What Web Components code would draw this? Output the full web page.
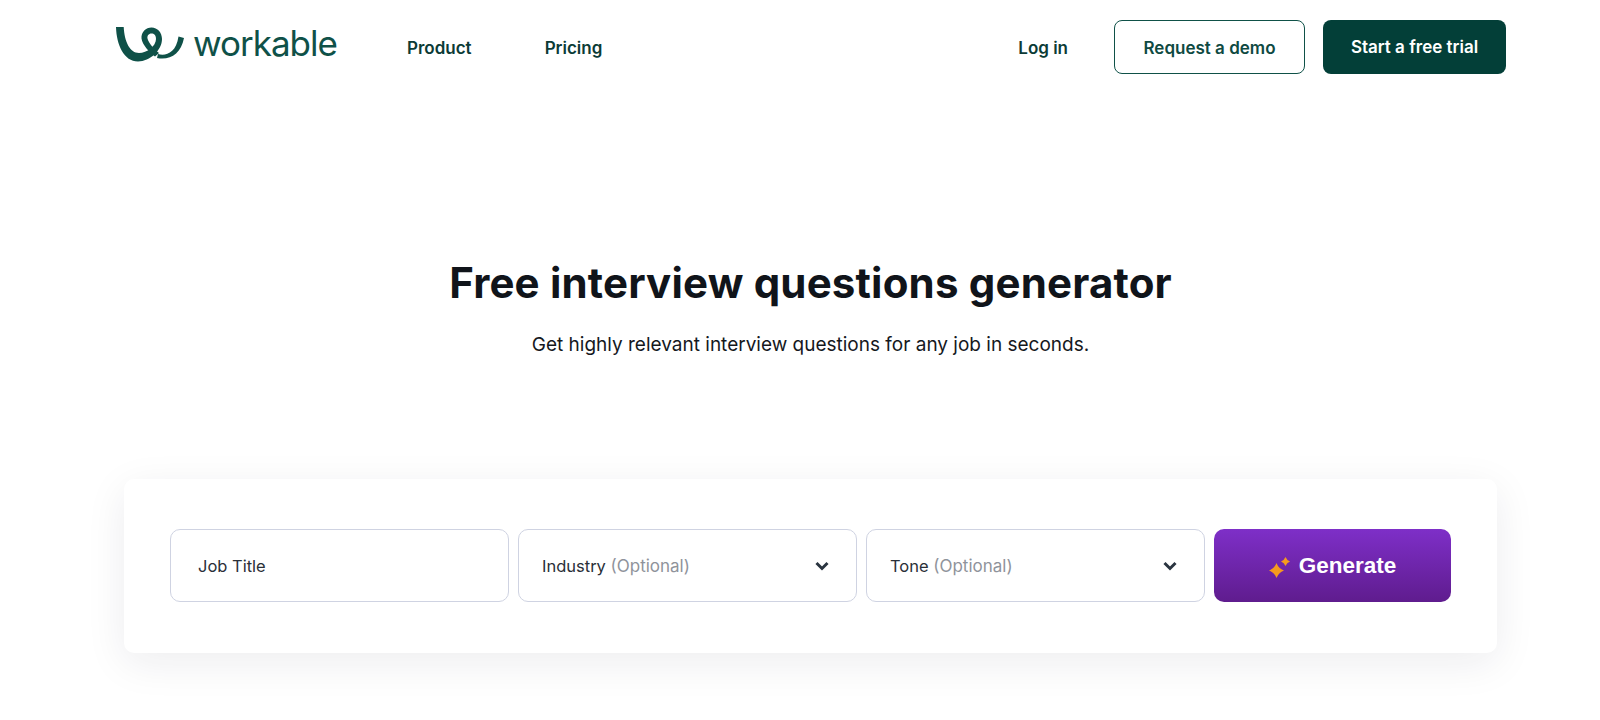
<!DOCTYPE html>
<html lang="en"><head><meta charset="utf-8"><title>Free interview questions generator</title>
<style>
html,body{margin:0;background:#fff;height:720px;overflow:hidden}
body{font-family:Inter,"Liberation Sans",sans-serif;color:#10141a}
</style></head><body>
<wk-page>
  <wk-nav slot="nav"></wk-nav>
  <wk-hero slot="hero" heading="Free interview questions generator" sub="Get highly relevant interview questions for any job in seconds."></wk-hero>
  <wk-form slot="form">
    <wk-field label="Job Title"></wk-field>
    <wk-field label="Industry" hint="(Optional)" select></wk-field>
    <wk-field label="Tone" hint="(Optional)" select></wk-field>
    <wk-generate>Generate</wk-generate>
  </wk-form>
</wk-page>
<script>
const def=(n,html,init)=>customElements.define(n,class extends HTMLElement{constructor(){super();this.attachShadow({mode:'open'}).innerHTML=html;init&&init(this)}});
def('wk-page',`<style>:host{display:block;width:1391px;margin-left:115px}</style>
<slot name="nav"></slot><slot name="hero"></slot><slot name="form"></slot>`);
def('wk-nav',`<style>
:host{display:flex;align-items:center;height:54px;margin-top:20px;font-weight:600;font-size:17px;color:#0c3b36}
svg{display:block;flex:none;margin-top:-6px}
.word{font:400 35px/1 Inter,sans-serif;color:#0f5148;margin-left:8px;width:147px;letter-spacing:-1px;margin-top:-7px}
nav{display:flex;gap:73px;margin-left:67px;padding-top:2px}
.sp{flex:1}
.login{margin-right:46px;padding-top:2px}
a{display:flex;align-items:center;justify-content:center;height:54px;border-radius:8px;box-sizing:border-box}
.demo{width:191px;border:1px solid #0f5148;color:#0f4a42;padding-top:2px}
.trial{width:183px;margin-left:18px;background:#033f38;color:#fff}
</style>
<svg width="70" height="40" viewBox="115 24 70 40" fill="#0f5148">
<path d="M116 27L123.700 27C124.500 42 130 53 139 53C147 53 156 46 156 39C156 35 154 33.500 151.500 33.500C148.500 33.500 147 36 147.500 38.500C148.500 43 154 49 159 53L155 56.500C149 52 142.500 45 141.500 38.500C141 32 146 27.500 151.500 27.500C157.500 27.500 162 32.500 162 39C162 50 150 61.500 138 61.500C124 61.500 116.500 45 116 27Z"/>
<path d="M158 54C165 56 176 54 178.500 36.500L184 38C181 54 170 60.500 157 58Z"/>
</svg>
<span class="word">workable</span>
<nav><span>Product</span><span>Pricing</span></nav>
<span class="sp"></span><span class="login">Log in</span>
<a class="demo">Request a demo</a><a class="trial">Start a free trial</a>`);
def('wk-hero',`<style>
:host{display:block;text-align:center}
h1{margin:0;padding-top:181px;font:700 42px/56px Inter,sans-serif;letter-spacing:.18px;color:#10141a}
p{margin:0;padding-top:21px;font:400 19px/26px Inter,sans-serif;color:#15181d}
</style><h1></h1><p></p>`,el=>{queueMicrotask(()=>{el.shadowRoot.querySelector('h1').textContent=el.getAttribute('heading');el.shadowRoot.querySelector('p').textContent=el.getAttribute('sub')})});
def('wk-form',`<style>
:host{display:grid;grid-template-columns:338.500px 338.500px 338.500px 237px;gap:9.500px;box-sizing:border-box;width:1373px;height:174px;margin:121px 0 0 9px;padding:50px 46px;background:#fff;border-radius:10px;box-shadow:0 10px 40px rgba(30,30,50,.08)}
</style><slot></slot>`);
def('wk-field',`<style>
:host{display:flex;align-items:center;justify-content:space-between;box-sizing:border-box;height:73px;border:1px solid #cfd3e2;border-radius:10px;padding:0 27px 0 23px;font-size:16.500px;color:#2a2f38}
:host([label="Job Title"]){padding-left:27px}
i{font-style:normal;color:#8f939b;font-size:17px}
svg{display:none}
:host([select]) svg{display:block}
</style><span><span id="l"></span> <i id="h"></i></span>
<svg width="14" height="10" viewBox="0 0 14 10" fill="none" stroke="#2a3440" stroke-width="3"><path d="M1.500 2l5.500 5.500L12.500 2"/></svg>`,el=>{queueMicrotask(()=>{el.shadowRoot.getElementById('l').textContent=el.getAttribute('label');el.shadowRoot.getElementById('h').textContent=el.getAttribute('hint')||''})});
def('wk-generate',`<style>
:host{display:flex;align-items:center;justify-content:center;gap:9px;height:73px;border-radius:10px;background:linear-gradient(#7e2fc8,#5f1c8e);color:#fff;font:700 22.500px "Liberation Sans",sans-serif}
svg{display:block;margin-top:4px}
</style>
<svg width="21" height="21" viewBox="0 0 21 21" fill="#f59a1e"><path d="M7.500 6Q9.500 11.500 15 13.500Q9.500 15.500 7.500 21Q5.500 15.500 0 13.500Q5.500 11.500 7.500 6Z"/><path d="M16.500 0Q17.800 3.200 21 4.500Q17.800 5.800 16.500 9Q15.200 5.800 12 4.500Q15.200 3.200 16.500 0Z"/></svg><slot></slot>`);
</script></body></html>
